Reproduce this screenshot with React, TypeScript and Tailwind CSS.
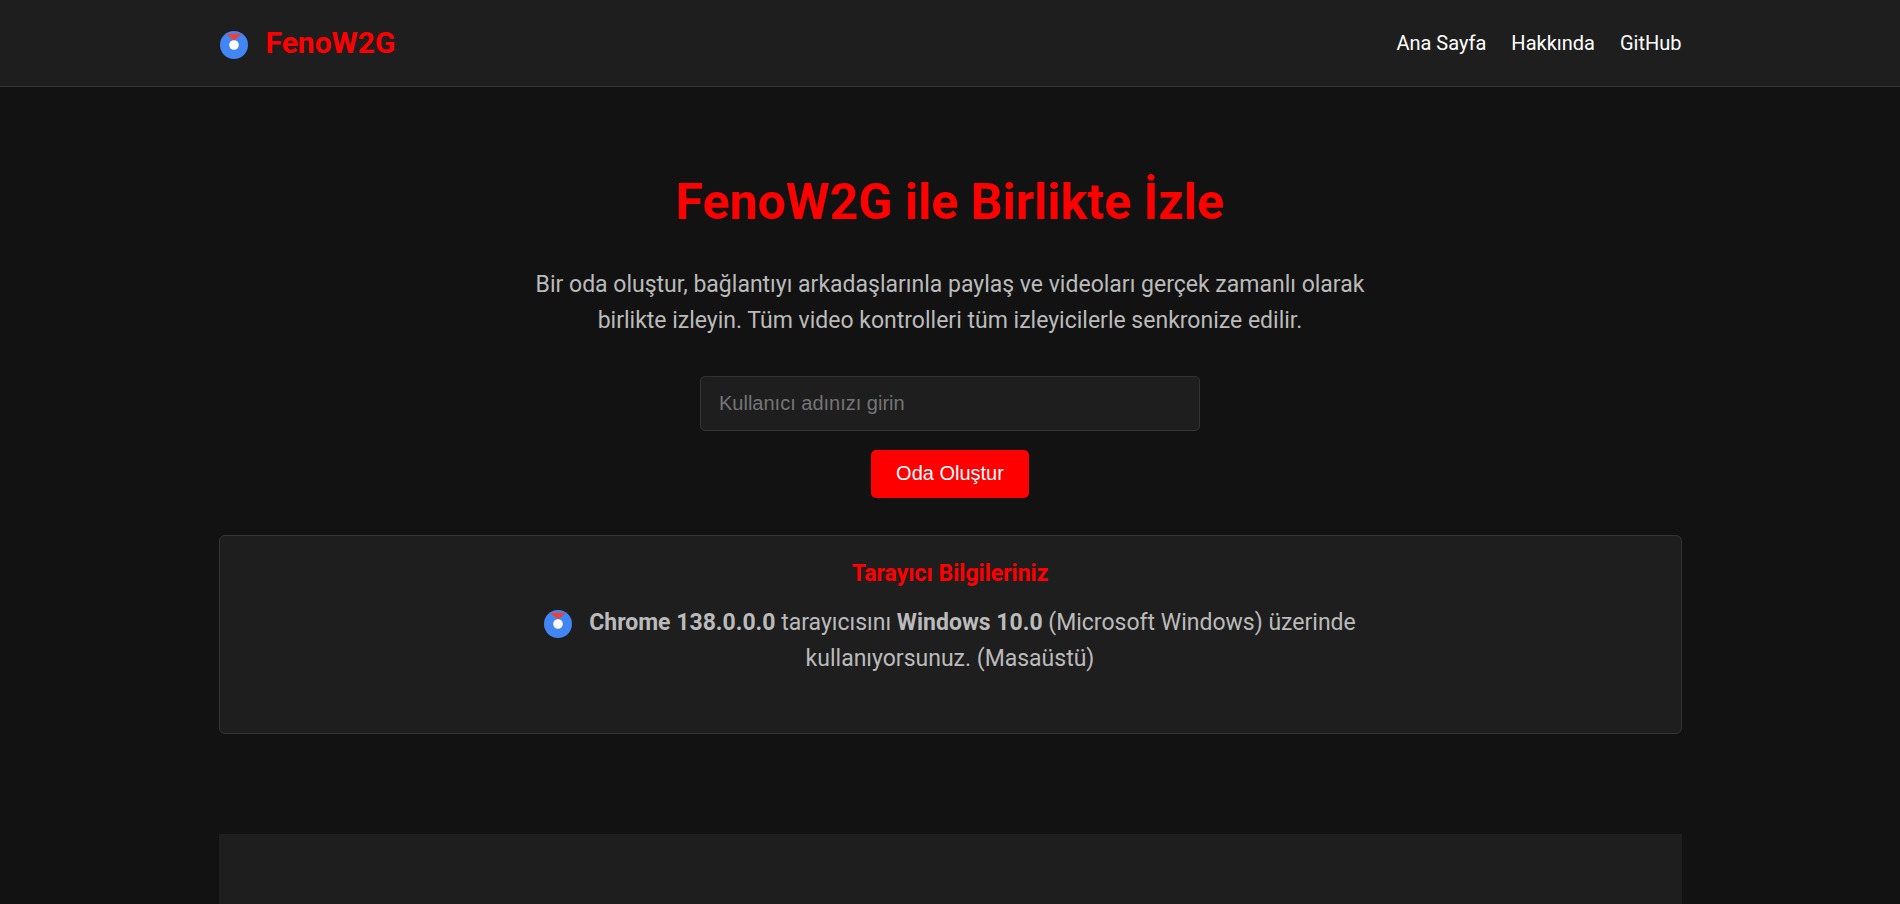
function BrowserIcon({ className }: { className: string }) {
  return (
    <svg viewBox="0 0 28 28" className={className} aria-hidden="true">
      <circle cx="14" cy="14" r="14" fill="#4285f4" />
      <path d="M6 2.800H22L14 9.500Z" fill="#ea4335" />
      <circle cx="14" cy="14" r="4.800" fill="#fff" />
    </svg>
  );
}

const links = ["Ana Sayfa", "Hakkında", "GitHub"];

export default function App() {
  return (
    <div className="h-screen overflow-hidden bg-[#121212] font-[Roboto,sans-serif] text-white">
      <header className="border-b border-[#333] bg-[#1e1e1e] px-5">
        <div className="mx-auto flex h-[86px] max-w-[1463px] items-center justify-between">
          <a href="#" className="flex items-center pb-0.5 text-[30px] font-bold text-[#f00]">
            <BrowserIcon className="mt-[5px] mr-[18px] ml-px size-7" />
            FenoW2G
          </a>
          <nav className="flex gap-[25px] text-[20px]">
            {links.map((label) => (
              <a key={label} href="#">{label}</a>
            ))}
          </nav>
        </div>
      </header>

      <main className="px-5">
        <div className="mx-auto flex max-w-[1463px] flex-col items-center pt-[75px] text-center">
          <h1 className="text-[50px] leading-[80px] font-bold text-[#f00]">FenoW2G ile Birlikte İzle</h1>
          <p className="mt-[25px] max-w-[875px] text-[23px] leading-[36px] text-[#bbb]">
            Bir oda oluştur, bağlantıyı arkadaşlarınla paylaş ve videoları gerçek zamanlı olarak birlikte izleyin. Tüm
            video kontrolleri tüm izleyicilerle senkronize edilir.
          </p>
          <form className="mt-[37px] flex w-full flex-col items-center gap-[19px] font-['Liberation_Sans',sans-serif] text-[20px]">
            <input
              type="text"
              aria-label="Kullanıcı adınızı girin"
              placeholder="Kullanıcı adınızı girin"
              className="h-[55px] w-full max-w-[500px] rounded-[5px] border border-[#333] bg-[#1e1e1e] px-[18px] placeholder:text-[#757575]"
            />
            <button type="button" className="h-12 rounded-[5px] bg-[#f00] px-[25px] pb-0.5">Oda Oluştur</button>
          </form>
          <section className="mt-[37px] w-full rounded-[6px] border border-[#333] bg-[#1e1e1e] px-5 pt-[19px] pb-[56px]">
            <h2 className="text-[23px] leading-[37px] font-bold text-[#f00]">Tarayıcı Bilgileriniz</h2>
            <p className="mx-auto mt-[13px] max-w-[875px] text-[23px] leading-[36px] text-[#bbb]">
              <BrowserIcon className="mr-[17px] inline size-7" />
              <strong>Chrome 138.0.0.0</strong> tarayıcısını <strong>Windows 10.0</strong> (Microsoft Windows) üzerinde
              kullanıyorsunuz. (Masaüstü)
            </p>
          </section>
          <section className="mt-[100px] h-[250px] w-full bg-[#1e1e1e]" />
        </div>
      </main>
    </div>
  );
}
